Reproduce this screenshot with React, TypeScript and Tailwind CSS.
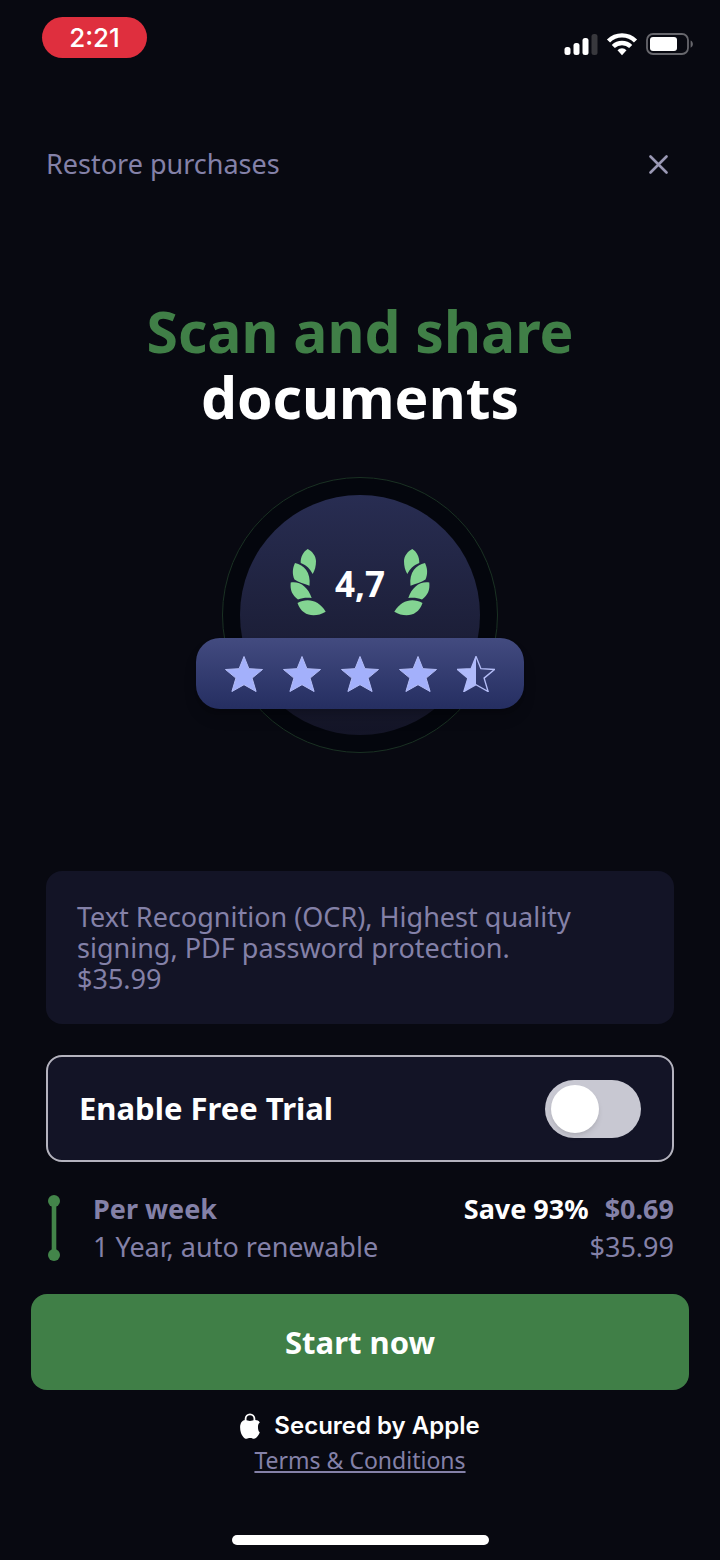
import { useState } from 'react';

const STAR = 'M19.5 1 24.4 13.2 38 14 27.6 22.6 31.6 36 19.500 29.200 7.400 36 11.400 22.600 1 14 14.600 13.200Z';

function StatusIcons() {
    return (
        <svg width="130" height="24" viewBox="0 0 130 24" fill="none">
            {/* Signal */}
            <rect x="0.5" y="15" width="6" height="8" rx="2.5" fill="#fff" />
            <rect x="9.5" y="11" width="6" height="12" rx="2.5" fill="#fff" />
            <rect x="18.5" y="6" width="6" height="17" rx="2.5" fill="#fff" />
            <rect x="27.5" y="2" width="6" height="21" rx="2.5" fill="#38383d" />
            {/* Wifi */}
            <g stroke="#fff" strokeWidth="4.4">
                <path d="M44.5 9a19 19 0 0 1 27 0" />
                <path d="M49.3 14.5a12.4 12.4 0 0 1 17.4 0" />
            </g>
            <path d="M53.5 18.2a6.400 6.400 0 0 1 9 0L58 23.200Z" fill="#fff" />
            {/* Battery */}
            <rect x="83" y="2" width="41" height="20" rx="6" stroke="#67676d" strokeWidth="1.8" />
            <rect x="86" y="5" width="27" height="14" rx="3" fill="#fff" />
            <path d="M126.6 8.5c3 1.2 3 6 0 7.2Z" fill="#67676d" />
        </svg>
    );
}

function Laurel({ className = '' }: { className?: string }) {
    return (
        <svg width="36" height="68" viewBox="0 0 36 68" fill="#83d492" className={className}>
            <path d="M17.7 0C22 2 26 7 26 12 26 17 25 21 22.7 25 20 20 17 16.5 10.7 14 10.5 8 13 3 17.7 0Z" />
            <path d="M5 14C14 16 21 23 19.5 36.7 14 34.5 9 33.5 4.5 30.5 2 25 2.5 19 5 14Z" />
            <path d="M.7 33.5C10 32 18 38 21.7 49 16 48.5 12 49 8 50.5 2 46 0 41 .7 33.5Z" />
            <path d="M7.5 54C17 48.5 29 51 35.7 62.7 25 69 12 67.5 7.5 54Z" />
        </svg>
    );
}

function Star({ half = false }: { half?: boolean }) {
    return (
        <svg width="38" height="36" viewBox="0.5 0.5 38 36">
            {half ? (
                <>
                    <path d={STAR} fill="none" stroke="#b4bdf7" strokeWidth="1.4" />
                    <path d="M19.5 1V29.2L7.4 36 11.4 22.6 1 14 14.6 13.2Z" fill="#b0bbfb" />
                </>
            ) : (
                <path d={STAR} fill="#a3b0fb" stroke="#b4bdf7" strokeWidth="1" />
            )}
        </svg>
    );
}

function RatingBadge() {
    return (
        <div className="mx-auto mt-[47px] grid justify-items-center">
            <div className="col-start-1 row-start-1 flex size-[276px] items-center justify-center rounded-full border border-[#1a3123] bg-[#04060d]">
                <div className="flex size-60 justify-center gap-[9px] rounded-full bg-linear-to-b from-[#282d52] to-[#141527] pt-[54px]">
                    <Laurel />
                    <span className="h-[68px] text-[35px] leading-[70px] font-bold text-white">4,7</span>
                    <Laurel className="-scale-x-100" />
                </div>
            </div>
            <div className="col-start-1 row-start-1 mt-[161px] flex h-[71px] w-[328px] items-center justify-center gap-5 rounded-3xl bg-linear-to-b from-[#434b80] to-[#252e61] shadow-lg shadow-black/20">
                <Star />
                <Star />
                <Star />
                <Star />
                <Star half />
            </div>
        </div>
    );
}

export default function App() {
    const [trial, setTrial] = useState(false);

    return (
        <div className="flex min-h-screen flex-col bg-[#080911] font-['Noto_Sans',sans-serif] text-[27px] text-[#8481a8]">
            {/* Status bar */}
            <div className="flex items-start justify-between pt-[17px] pr-[26px] pl-[42px]">
                <span className="flex h-[41px] w-[105px] items-center justify-center rounded-full bg-[#df2f3e] font-['Inter',sans-serif] text-[26px] font-medium text-white">
                    2:21
                </span>
                <div className="pt-[15px]">
                    <StatusIcons />
                </div>
            </div>

            <header className="mt-20 flex h-[52px] items-center justify-between px-[46px]">
                <button type="button">Restore purchases</button>
                <button type="button" aria-label="Close" className="p-1.5">
                    <svg width="19" height="19" viewBox="0 0 19 19" stroke="#9a98b4" strokeWidth="2.6" strokeLinecap="round">
                        <path d="M1.5 1.5l16 16M17.5 1.5l-16 16" />
                    </svg>
                </button>
            </header>

            <h1 className="mt-[108px] text-center text-[57px] leading-[66px] font-bold text-white">
                <span className="block text-[#407f47]">Scan and share</span>
                documents
            </h1>

            <RatingBadge />

            <main className="mt-[118px] px-[46px]">
                <p className="rounded-2xl bg-[#131426] px-[31px] py-[30px] leading-[31px]">
                    Text Recognition (OCR), Highest quality signing, PDF password protection.
                    <br />
                    $35.99
                </p>

                <label className="mt-[31px] flex h-[107px] items-center justify-between rounded-2xl border-2 border-[#b4b3be] bg-[#131426] px-[31px] text-[31px] font-bold text-white">
                    Enable Free Trial
                    <input
                        type="checkbox"
                        role="switch"
                        checked={trial}
                        onChange={(e) => setTrial(e.target.checked)}
                        className="flex h-[58px] w-24 appearance-none items-center rounded-full bg-[#c8c8d2] px-1.5 before:size-12 before:rounded-full before:bg-white before:shadow-md checked:justify-end checked:bg-[#407f47]"
                    />
                </label>

                <div className="mt-7 flex items-center leading-[38px]">
                    <svg width="16" height="66" viewBox="0 0 16 66" fill="#43854a">
                        <circle cx="8" cy="6" r="6" />
                        <rect x="5.7" y="6" width="4.6" height="54" />
                        <circle cx="8" cy="60" r="6" />
                    </svg>
                    <div className="ml-[31px] flex-1">
                        <div className="font-bold">Per week</div>
                        <div>1 Year, auto renewable</div>
                    </div>
                    <div className="text-right">
                        <div className="flex gap-4 font-bold">
                            <span className="text-white">Save 93%</span>
                            <span>$0.69</span>
                        </div>
                        <div>$35.99</div>
                    </div>
                </div>
            </main>

            <div className="mt-7 px-[31px]">
                <button type="button" className="h-24 w-full rounded-2xl bg-[#407f47] text-[31px] font-bold text-white">
                    Start now
                </button>
            </div>

            <footer className="mt-5 flex flex-col items-center">
                <div className="flex h-8 items-center gap-3.5 font-['Inter',sans-serif] text-2xl font-semibold text-white">
                    <svg width="20" height="26" viewBox="0 0 376 489" fill="#fff">
                        <path d="M105 170V108a83 83 0 0 1 166 0v62" fill="none" stroke="#fff" strokeWidth="34" />
                        <path d="M338 262c0-36 12-64 34-82-18-32-48-46-88-46-35 0-62 16-96 16-30 0-60-16-90-16C45 134 2 190 2 273q0 40 14 92c13 47 59 121 107 119 25-.6 38-14 68-14 31 0 42 14 70 14 48-.7 98-74 110-121-24-20-33-55-33-101z" />
                    </svg>
                    Secured by Apple
                </div>
                <a href="#terms" className="text-[23px] leading-9 underline">
                    Terms &amp; Conditions
                </a>
            </footer>

            {/* Home indicator */}
            <div className="mx-auto mt-auto mb-[15px] h-2.5 w-[257px] rounded-full bg-white" />
        </div>
    );
}
